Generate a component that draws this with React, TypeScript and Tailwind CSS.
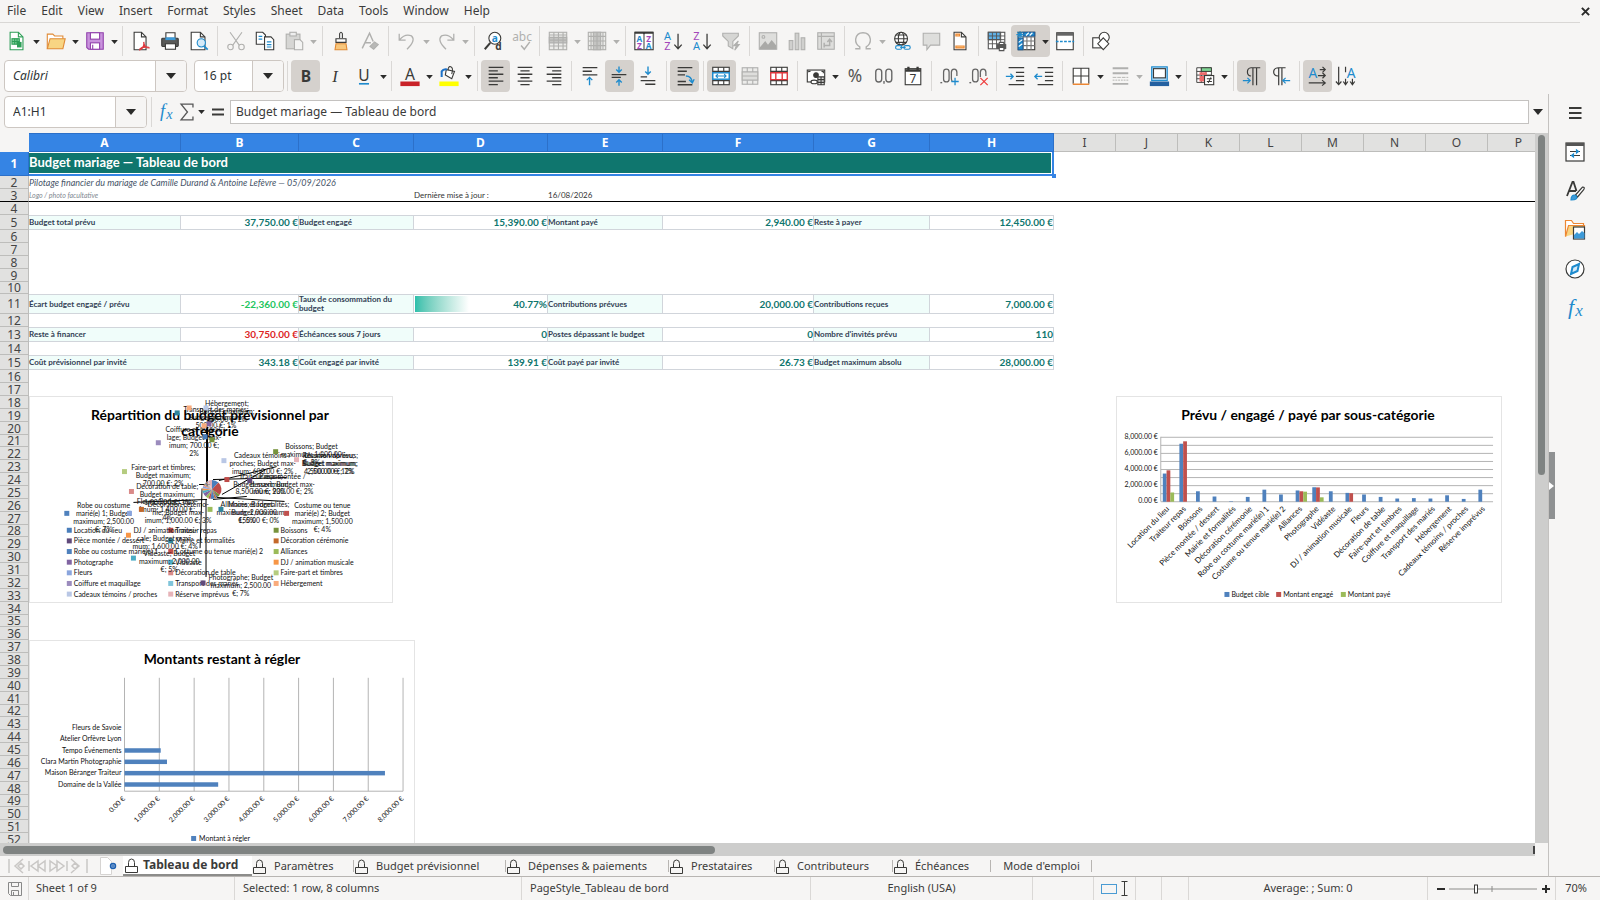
import type { ReactNode } from "react";
import { clsx } from "clsx";

// ─── Icons ────────────────────────────────────────────────
// 24px grid, thin strokes. Greyed commands use the same shapes in light grey.

const DARK = "#3a3a38";
const BLUE = "#1e8bcd";
const GREY = "#b0b0ae";

function Icon({ children, color = DARK, width = 1.2 }: { children: ReactNode; color?: string; width?: number }) {
  return (
    <svg viewBox="0 0 24 24" className="size-6 shrink-0 overflow-visible" fill="none" stroke={color} strokeWidth={width} aria-hidden="true">
      {children}
    </svg>
  );
}

function Glyph({ x, y, size, fill, bold, italic, serif, children }: {
  x: number; y: number; size: number; fill: string; bold?: boolean; italic?: boolean; serif?: boolean; children: ReactNode;
}) {
  return (
    <text x={x} y={y} fontSize={size} fill={fill} stroke="none" textAnchor="middle" fontWeight={bold ? 700 : 400}
      fontStyle={italic ? "italic" : "normal"} fontFamily={serif ? "'Liberation Serif', serif" : "'Noto Sans', sans-serif"}>
      {children}
    </text>
  );
}

const icons: Record<string, ReactNode> = {
  new: (
    <Icon color="#2e9e57">
      <path d="M4.500 2.500h9l5 5v14h-14z" fill="#fff" /><path d="M13.500 2.500v5h5" />
      <rect x="6.500" y="9.500" width="8" height="6" fill="#7fcf9a" /><path d="M6.500 12.500h8M9.500 9.500v6M12 9.500v6" />
      <rect x="12" y="13" width="5" height="6" fill="#2e9e57" stroke="none" />
    </Icon>
  ),
  open: (
    <Icon color="#e08a35">
      <path d="M2.500 20.500v-16h6l2 2h9v3" fill="#fff" /><path d="M2.500 20.500l3-11h16.500l-2.500 11z" fill="#f8d583" />
    </Icon>
  ),
  save: (
    <Icon color="#9141ac">
      <path d="M3 3h18v18h-16l-2-2z" fill="#c993dd" /><rect x="7" y="3" width="10" height="7" fill="#fff" />
      <rect x="7" y="14" width="10" height="7" fill="#fff" /><path d="M9.500 16v5" />
    </Icon>
  ),
  pdf: (
    <Icon>
      <path d="M4.500 2.500h8l5 5v14h-13z" fill="#fff" /><path d="M12.500 2.500v5h5" />
      <path d="M10 22c5-2 6-5 5-9c0 5 3 6.500 6.500 6.500M10.500 21c2-2 6-3 10-2" stroke="#e0393e" strokeWidth="1.500" />
    </Icon>
  ),
  print: (
    <Icon>
      <path d="M7.500 9v-6h10v6" fill="#fff" /><rect x="3" y="9" width="18" height="9" rx="1" fill="#5a5a58" />
      <rect x="7" y="8" width="11" height="3" fill="#3d9ad8" stroke="none" /><rect x="7" y="15" width="11" height="6" fill="#fff" />
    </Icon>
  ),
  preview: (
    <Icon>
      <path d="M3.500 2.500h10l5 5v14h-15z" fill="#fff" /><path d="M13.500 2.500v5h5" />
      <circle cx="14.500" cy="14" r="4.500" fill="#d5eaf8" stroke={BLUE} /><path d="M17.500 17.500l4 4" stroke={BLUE} strokeWidth="2" />
    </Icon>
  ),
  cut: (
    <Icon color={GREY}>
      <path d="M5.500 2.500l10 14M18.500 2.500l-10 14" /><circle cx="6" cy="18.500" r="3" /><circle cx="18" cy="18.500" r="3" />
    </Icon>
  ),
  copy: (
    <Icon>
      <path d="M2.500 2.500h7l3 3v10h-10z" fill="#fff" /><path d="M11.500 7.500h7l3 3v11h-10z" fill="#fff" />
      <path d="M5 7h4M5 10h4M14 13h5M14 16h5M14 18.500h5" stroke={BLUE} />
    </Icon>
  ),
  paste: (
    <Icon color={GREY}>
      <rect x="3.500" y="4.500" width="15" height="16" fill="#d6d6d4" /><rect x="7.500" y="2.500" width="7" height="4" fill="#eee" />
      <path d="M12.500 10.500h6l3 3v8h-9z" fill="#f4f4f3" />
    </Icon>
  ),
  brush: (
    <Icon>
      <path d="M10.500 9v-5q1.500-3 3 0v5" fill="#fff" /><path d="M6.500 9.500h11v4h-11z" fill="#fff" />
      <path d="M6.500 15h11l1 6.500h-13z" fill="#f8c77d" stroke="#e08a35" />
    </Icon>
  ),
  clear: (
    <Icon color={GREY}>
      <path d="M3.500 20l8-16.500l4 9M7 14h6" strokeWidth="1.600" /><path d="M12 18l5-5l4 3l-5 5z" fill="#b8b8b6" />
    </Icon>
  ),
  undo: <Icon color={GREY} width={1.4}><path d="M3.500 4v7h7M4 10.500q6-7 13-4q5 5-5 14.500" /></Icon>,
  redo: <Icon color={GREY} width={1.4}><path d="M20.500 4v7h-7M20 10.500q-6-7-13-4q-5 5 5 14.500" /></Icon>,
  find: (
    <Icon>
      <circle cx="14" cy="9" r="6.500" fill="#fff" /><path d="M9 14l-6 7" strokeWidth="2.200" />
      <Glyph x={14} y={13} size={11} fill={BLUE} bold>a</Glyph><Glyph x={18} y={22} size={11} fill={DARK} bold>d</Glyph>
    </Icon>
  ),
  spell: <Icon color={GREY} width={1.6}><Glyph x={12} y={12} size={13} fill={GREY}>abc</Glyph><path d="M11 17l3.500 4l6-8" /></Icon>,
  row: (
    <Icon color={GREY}>
      <rect x="2.500" y="2.500" width="19" height="19" fill="#ececea" /><path d="M2.500 8h19v6h-19z" fill="#c4c4c2" />
      <path d="M2.500 5.500h19M2.500 11h19M2.500 17.500h19M7.500 2.500v19M12.500 2.500v19M17.500 2.500v19" />
    </Icon>
  ),
  column: (
    <Icon color={GREY}>
      <rect x="2.500" y="2.500" width="19" height="19" fill="#ececea" /><path d="M8 2.500h8v19h-8z" fill="#c4c4c2" />
      <path d="M2.500 7h19M2.500 12h19M2.500 17h19M5.500 2.500v19M12 2.500v19M18.500 2.500v19" />
    </Icon>
  ),
  sort: (
    <Icon>
      <rect x="2" y="2.500" width="20" height="19" fill="#fff" /><path d="M2 3h20M12 3v18" strokeWidth="2" />
      <path d="M12 4.500v16.500" stroke="#fff" strokeWidth="1" />
      <Glyph x={7} y={13} size={9} fill={BLUE} bold>A</Glyph><Glyph x={7} y={21} size={9} fill="#a347ba" bold>Z</Glyph>
      <Glyph x={17} y={13} size={9} fill="#a347ba" bold>Z</Glyph><Glyph x={17} y={21} size={9} fill={BLUE} bold>A</Glyph>
    </Icon>
  ),
  asc: (
    <Icon width={1.4}>
      <Glyph x={6} y={10.5} size={12} fill={BLUE}>A</Glyph><Glyph x={6} y={22} size={12} fill="#a347ba">Z</Glyph>
      <path d="M17.500 4v16M13.500 16l4 4.500l4-4.500" />
    </Icon>
  ),
  desc: (
    <Icon width={1.4}>
      <Glyph x={6} y={10.5} size={12} fill="#a347ba">Z</Glyph><Glyph x={6} y={22} size={12} fill={BLUE}>A</Glyph>
      <path d="M17.500 4v16M13.500 16l4 4.500l4-4.500" />
    </Icon>
  ),
  filter: (
    <Icon color={GREY}>
      <path d="M3 3.500h17v3l-6 6v8l-5-3v-5l-6-6z" fill="#d6d6d4" /><path d="M20 12l-5 5h3l-2 5l5-6h-3z" fill="#b0b0ae" />
    </Icon>
  ),
  image: (
    <Icon color={GREY}>
      <rect x="2.500" y="3" width="19" height="18" fill="#dededc" /><path d="M3 19l6-7l3 4l4-5l5 6v4h-18z" fill="#a9a9a7" stroke="none" />
      <circle cx="7" cy="7.500" r="1.500" />
    </Icon>
  ),
  chart: (
    <Icon color={GREY}>
      <rect x="3.500" y="11.500" width="4" height="10" fill="#d0d0ce" /><rect x="10" y="3.500" width="4" height="18" fill="#d0d0ce" />
      <rect x="16.500" y="8.500" width="4" height="13" fill="#d0d0ce" />
    </Icon>
  ),
  pivot: (
    <Icon color={GREY}>
      <rect x="3" y="3" width="18" height="18" fill="#dededc" /><path d="M7 3v18M3 7h18" />
      <path d="M10 17h6v-6M10 14v5M13.500 13l2.500-3l2.500 3" strokeWidth="1.600" />
    </Icon>
  ),
  omega: <Icon color={GREY} width={1.5}><path d="M3.500 20.500h5v-2q-5-3-4.500-8.500q1-7 8-7t8 7q.5 5.500-4.500 8.500v2h5" /></Icon>,
  link: (
    <Icon>
      <circle cx="11" cy="9.500" r="7" fill="#fff" /><ellipse cx="11" cy="9.500" rx="3" ry="7" /><path d="M4 9.500h14M5 5.500h12M5 13.500h12" />
      <rect x="5" y="17" width="7" height="4" rx="2" stroke={BLUE} fill="#f6f5f4" /><rect x="14" y="17" width="7" height="4" rx="2" stroke={BLUE} fill="#f6f5f4" />
      <path d="M10 19h6" stroke={BLUE} />
    </Icon>
  ),
  comment: <Icon color={GREY}><path d="M3.500 3.500h18v13h-10l-4 5v-5h-4z" fill="#dededc" /></Icon>,
  header: (
    <Icon>
      <path d="M5.500 2.500h8l5 5v14h-13z" fill="#fff" /><path d="M13.500 2.500v5h5" />
      <path d="M7.500 4.500h4v2h-4zM7.500 17.500h9v2h-9z" stroke="#ed8733" fill="#f8d08f" />
    </Icon>
  ),
  area: (
    <Icon color="#555">
      <rect x="2.500" y="2.500" width="18" height="18" fill="#fff" /><path d="M2.500 2.500h13v8h-13z" fill="#5fb0e6" />
      <path d="M2.500 6.500h18M2.500 10.500h18M2.500 15h18M7 2.500v18M11.500 2.500v18M16 2.500v18" strokeWidth="1" />
      <rect x="12.500" y="16" width="9" height="4" fill="#5a5a58" /><path d="M14.500 13.500h5v2.500h-5zM14.500 19h5v3.500h-5z" fill="#fff" />
    </Icon>
  ),
  freeze: (
    <Icon>
      <rect x="3.500" y="2.500" width="18" height="19" fill="#fff" /><path d="M3.500 7.500h18M3.500 12h18M3.500 17h18M9 2.500v19M13 2.500v19M17.500 2.500v19" stroke="#777" />
      <path d="M9.500 2.500h12v4h-12zM3.500 9h5v12.500h-5z" fill={BLUE} stroke="#1c5fa0" /><path d="M4 13.500l4-3M4 18l4-3M12 6l3-3M16 6l3-3" stroke="#fff" />
      <path d="M5.500 1v8M1.500 5h8M2.500 2l6 6M8.500 2l-6 6" stroke={BLUE} />
    </Icon>
  ),
  split: (
    <Icon>
      <rect x="3" y="3" width="18" height="18.500" fill="#fff" /><path d="M3 4.500h18" strokeWidth="3.500" stroke="#666" /><path d="M2 12.500h20" stroke={BLUE} strokeDasharray="3 1.500" strokeWidth="1.500" />
    </Icon>
  ),
  shapes: (
    <Icon>
      <rect x="3" y="8.500" width="11" height="11" fill="#fff" /><circle cx="15.500" cy="8" r="5.500" fill="#fff" />
      <path d="M14.500 8.500l6 6.500l-6 6.500l-6-6.500z" fill="#fff" />
    </Icon>
  ),
  bold: <Icon><Glyph x={12} y={18} size={17} fill={DARK} bold>B</Glyph></Icon>,
  italic: <Icon><Glyph x={12} y={18} size={18} fill={DARK} italic serif>I</Glyph></Icon>,
  underline: <Icon><Glyph x={12} y={17} size={17} fill={DARK}>U</Glyph><path d="M6.500 20.500h11" stroke={BLUE} strokeWidth="1.800" /></Icon>,
  color: <Icon><Glyph x={12} y={16} size={17} fill={DARK}>A</Glyph><path d="M1.500 20.500h21" stroke="#c92228" strokeWidth="5" /></Icon>,
  fill: (
    <Icon>
      <path d="M9 5l9 2l-3 8l-7-4z" fill="#fff" /><path d="M11 6q0-5 3-4t1 8" /><path d="M4 13v-6q2-3 6-2" stroke="#1c71c8" strokeWidth="2.200" />
      <path d="M1.500 20.500h21" stroke="#ffff00" strokeWidth="5" />
    </Icon>
  ),
  left: <Icon width={1.4}><path d="M4 2.500h16M4 6.300h10M4 10.100h16M4 13.900h10M4 17.700h16M4 21.500h10" /></Icon>,
  center: <Icon width={1.4}><path d="M4 2.500h16M7 6.300h10M4 10.100h16M7 13.900h10M4 17.700h16M7 21.500h10" /></Icon>,
  right: <Icon width={1.4}><path d="M4 2.500h16M10 6.300h10M4 10.100h16M10 13.900h10M4 17.700h16M10 21.500h10" /></Icon>,
  top: <Icon width={1.5}><path d="M4 2.800h16M4 6.800h10M4 10.800h16" /><path d="M11.500 22v-8.500M8.500 16.500l3-3l3 3" stroke={BLUE} /></Icon>,
  middle: <Icon width={1.5}><path d="M4 10.500h16M4 13.500h10" /><path d="M12 1.500v6.500M9 5l3 3l3-3M12 22.500v-6.500M9 19l3-3l3 3" stroke={BLUE} /></Icon>,
  bottom: <Icon width={1.5}><path d="M4 13h7M4 17h16M9 21h11" /><path d="M12 1.500v8.500M9 7l3 3l3-3" stroke={BLUE} /></Icon>,
  wrap: <Icon width={1.5}><path d="M4 2.800h16M4 6.800h10M4 10.800h8M4 18h9M4 21.500h16" /><path d="M13 12q6 0 7 7M16.500 16l3.500 3.500l2-4" stroke={BLUE} /></Icon>,
  merge: (
    <Icon>
      <rect x="3" y="2.500" width="18" height="19" fill="#fff" /><path d="M3 7h18M3 17h18M9 2.500v4M15 2.500v4M9 17v4.500M15 17v4.500" />
      <rect x="3" y="8.500" width="18" height="7" fill="#fff" stroke={BLUE} strokeWidth="1.600" /><path d="M6 12h12M8.500 10l-2 2l2 2M15.500 10l2 2l-2 2" stroke={BLUE} />
    </Icon>
  ),
  cells: <Icon color={GREY}><rect x="3.500" y="3" width="17" height="18" fill="#ececea" /><path d="M3.500 7.500h17v9h-17z" fill="#dededc" /><path d="M3.500 12h17M9 3v4.500M15 3v4.500M9 16.500v4.500M15 16.500v4.500" /></Icon>,
  unmerge: (
    <Icon>
      <rect x="3" y="2.500" width="18" height="19" fill="#fff" /><path d="M3 7h18M3 17h18M9 2.500v4M15 2.500v4M9 17v4.500M15 17v4.500" />
      <path d="M3 8.500h18v7.500h-18zM8.500 8.500v7.500M15.500 8.500v7.500" fill="#fff" stroke="#e0393e" strokeWidth="1.500" />
    </Icon>
  ),
  currency: (
    <Icon>
      <rect x="2.500" y="5.500" width="19" height="13" fill="#fff" /><circle cx="12" cy="11" r="2.500" fill={DARK} /><path d="M4 8v-1h2M18 7h2v2" />
      <ellipse cx="10" cy="18.500" rx="3.500" ry="2" fill="#fff" /><path d="M14 13h7v8.500h-7zM14 16h7M14 19h7M17.500 13v8.500" fill="#ddd" />
    </Icon>
  ),
  percent: <Icon><Glyph x={12} y={19} size={19} fill="#555">%</Glyph></Icon>,
  number: <Icon width={1.5} color="#666"><rect x="3" y="4.500" width="6.500" height="14" rx="3.200" /><rect x="14" y="4.500" width="6.500" height="14" rx="3.200" /><path d="M12 17.500v3" /></Icon>,
  date: <Icon><rect x="3.500" y="4" width="17" height="17.500" fill="#fff" /><path d="M3.500 6h17M7 2v4M17 2v4" strokeWidth="2.500" /><Glyph x={12} y={19.5} size={13} fill={DARK}>7</Glyph></Icon>,
  addDec: <Icon width={1.4} color="#666"><path d="M2.500 18.500v1.500" strokeWidth="2" /><rect x="5" y="4.500" width="6" height="14" rx="3" /><path d="M14.500 18q-1-1-1-3.500v-6.500q0-3.500 3-3.500t3 3.500v4" /><path d="M17.500 14v8M13.500 18h8" stroke={BLUE} /></Icon>,
  delDec: <Icon width={1.4} color="#666"><path d="M2.500 18.500v1.500" strokeWidth="2" /><rect x="5" y="4.500" width="6" height="14" rx="3" /><path d="M13.500 13v-5q0-3.500 3-3.500t3 3.500v4" /><path d="M13.500 14l8 8M21.500 14l-8 8" stroke="#ee3e3e" /></Icon>,
  indent: <Icon width={1.4}><path d="M5 2.800h17M13 8h9M13 12.500h9M13 17h9M5 21.500h17" /><path d="M2 12.500h8M7 9.500l3 3l-3 3" stroke={BLUE} /></Icon>,
  outdent: <Icon width={1.4}><path d="M5 2.800h17M13 8h9M13 12.500h9M13 17h9M5 21.500h17" /><path d="M2 12.500h8M5 9.500l-3 3l3 3" stroke={BLUE} /></Icon>,
  borders: <Icon><path d="M3.500 20.500v-17h17v17M12 3.500v17M3.500 12h17" fill="#fff" /><path d="M3 21h18" stroke="#ed8733" strokeWidth="1.600" /></Icon>,
  style: <Icon color={GREY} width={2}><path d="M4 3.500h17M4 9h17M4 20.500h17" /><path d="M4 13.500h17" strokeDasharray="4 1" strokeWidth="1" /><path d="M4 16.500h17" strokeDasharray="2 1" strokeWidth="1" /></Icon>,
  line: <Icon><rect x="4" y="2" width="17" height="15" fill="#a5d3f2" stroke={BLUE} /><rect x="6" y="4" width="13" height="10" fill="#fff" /><path d="M2 20.500h21" stroke="#2460a0" strokeWidth="5" /></Icon>,
  cond: (
    <Icon>
      <path d="M3 3h16v16h-16zM8 3v16M13 3v16M3 7h16M3 11h16M3 15h16" fill="#fff" strokeWidth="1" /><path d="M8 3h11v4h-11z" fill="#7fd694" strokeWidth="1" /><path d="M6 8h8v3h-8zM6 12h5v6h-5z" fill="#ed6b6b" stroke="none" />
      <rect x="11.500" y="11.500" width="10" height="10" fill="#fff" /><path d="M14 15h5.500M14 18h5.500M18.500 13.500l-3 6" />
    </Icon>
  ),
  ltr: <Icon width={1.3}><path d="M11 12q-4-.5-4-4.500t4-4.500h10M13 3v19M17 3v19" /><path d="M2 17h8M7 14l3 3l-3 3" stroke={BLUE} /></Icon>,
  rtl: <Icon width={1.3}><path d="M9 12q-5-.5-5-4.500t5-4.500h8M9.500 3v19M13 3v19" /><path d="M14 17h8M17 14l-3 3l3 3" stroke={BLUE} /></Icon>,
  hText: <Icon width={1.3}><Glyph x={7.5} y={14.5} size={15} fill={BLUE}>A</Glyph><path d="M15 5h6M18 2l3 3l-3 3M13 11.500h8M18 8.500l3 3l-3 3M3 19.500h18M17.500 16.500l3.500 3l-3.500 3" /></Icon>,
  vText: <Icon width={1.3}><Glyph x={17.5} y={14.5} size={15} fill={BLUE}>A</Glyph><path d="M4 2v19M1 18l3 3.500l3-3.500M11.500 2v6M11.500 15v6M9 18l2.500 3.500l2.500-3.500M19 15v6M16.500 18l2.500 3.500l2.500-3.500" /></Icon>,
  fx: <Icon><Glyph x={8} y={18} size={22} fill={BLUE} italic serif>f</Glyph><Glyph x={16} y={20} size={17} fill={BLUE} italic serif>x</Glyph></Icon>,
  sigma: <Icon width={1.4} color="#555"><path d="M18.500 7v-3.500h-13l7 8.500l-7 8.500h13v-3.500" /></Icon>,
  equal: <Icon width={2.2}><path d="M6 9.500h12M6 14.500h12" /></Icon>,
  menu: <Icon width={1.8}><path d="M6 7h12.500M6 12h12.500M6 17h12.500" /></Icon>,
  properties: <Icon><rect x="3" y="3" width="18" height="18" fill="#fff" /><path d="M3 4.500h18" strokeWidth="3" stroke="#555" /><path d="M7 11.500h10M7 15.500h10" /><path d="M13.500 10v3l2-1.500zM10.500 14v3l-2-1.500z" fill={BLUE} stroke={BLUE} /></Icon>,
  styles: <Icon><path d="M4 17l5.500-14h1l3 9M6 12h7" strokeWidth="1.800" /><path d="M12.500 16l7-8q3 0 1 3l-6 7z" fill="#fff" /><path d="M8 21q0-6 5-4.500q3 4.500-5 4.500z" fill="#3d9ad8" stroke={BLUE} /></Icon>,
  gallery: (
    <Icon color="#ed8733">
      <path d="M2.500 18.500v-16h6l2 3h10v3" fill="#fff" /><path d="M2.500 18.500l3-11h16l-1 6" fill="#f8d583" />
      <rect x="10.500" y="9" width="11" height="12" fill="#fff" stroke={DARK} /><path d="M11 17l3-3l2 2l3-3l2.500 2v5.500h-10.500z" fill="#3d9ad8" stroke="none" />
    </Icon>
  ),
  navigator: <Icon><circle cx="12" cy="12" r="9" fill="#fff" /><path d="M16 7l-1.500 7l-6.500 3l1.500-7z" fill="#d5eaf8" stroke={BLUE} strokeWidth="2" /></Icon>,
};

// ─── Toolbars ─────────────────────────────────────────────

type Item = { id: string; label: string; split?: boolean; active?: boolean; off?: boolean } | "|";

const standard: Item[] = [
  { id: "new", label: "New", split: true }, { id: "open", label: "Open", split: true }, { id: "save", label: "Save", split: true }, "|",
  { id: "pdf", label: "Export as PDF" }, { id: "print", label: "Print" }, { id: "preview", label: "Print Preview" }, "|",
  { id: "cut", label: "Cut", off: true }, { id: "copy", label: "Copy" }, { id: "paste", label: "Paste", split: true, off: true }, "|",
  { id: "brush", label: "Clone Formatting" }, { id: "clear", label: "Clear Formatting", off: true }, "|",
  { id: "undo", label: "Undo", split: true, off: true }, { id: "redo", label: "Redo", split: true, off: true }, "|",
  { id: "find", label: "Find and Replace" }, { id: "spell", label: "Spelling", off: true }, "|",
  { id: "row", label: "Row", split: true, off: true }, { id: "column", label: "Column", split: true, off: true }, "|",
  { id: "sort", label: "Sort" }, { id: "asc", label: "Sort Ascending" }, { id: "desc", label: "Sort Descending" }, { id: "filter", label: "AutoFilter", off: true }, "|",
  { id: "image", label: "Insert Image", off: true }, { id: "chart", label: "Insert Chart", off: true }, { id: "pivot", label: "Pivot Table", off: true }, "|",
  { id: "omega", label: "Special Character", split: true, off: true }, { id: "link", label: "Hyperlink" }, { id: "comment", label: "Comment", off: true }, { id: "header", label: "Headers and Footers" }, "|",
  { id: "area", label: "Print Area" }, { id: "freeze", label: "Freeze Rows and Columns", split: true, active: true }, { id: "split", label: "Split Window" }, "|",
  { id: "shapes", label: "Draw Functions" },
];

const formatting: Item[] = [
  { id: "bold", label: "Bold", active: true }, { id: "italic", label: "Italic" }, { id: "underline", label: "Underline", split: true }, "|",
  { id: "color", label: "Font Color", split: true }, { id: "fill", label: "Background Color", split: true }, "|",
  { id: "left", label: "Align Left", active: true }, { id: "center", label: "Center Horizontally" }, { id: "right", label: "Align Right" }, "|",
  { id: "top", label: "Align Top" }, { id: "middle", label: "Center Vertically", active: true }, { id: "bottom", label: "Align Bottom" }, "|",
  { id: "wrap", label: "Wrap Text", active: true }, "|",
  { id: "merge", label: "Merge and Center", active: true }, { id: "cells", label: "Merge Cells", off: true }, { id: "unmerge", label: "Unmerge Cells" }, "|",
  { id: "currency", label: "Format as Currency", split: true }, { id: "percent", label: "Format as Percent" }, { id: "number", label: "Format as Number" }, { id: "date", label: "Format as Date" }, "|",
  { id: "addDec", label: "Add Decimal Place" }, { id: "delDec", label: "Delete Decimal Place" }, "|",
  { id: "indent", label: "Increase Indent" }, { id: "outdent", label: "Decrease Indent" }, "|",
  { id: "borders", label: "Borders", split: true }, { id: "style", label: "Border Style", split: true, off: true }, { id: "line", label: "Border Color", split: true }, "|",
  { id: "cond", label: "Conditional", split: true }, "|",
  { id: "ltr", label: "Left-To-Right", active: true }, { id: "rtl", label: "Right-To-Left" }, "|",
  { id: "hText", label: "Text left to right", active: true }, { id: "vText", label: "Text top to bottom" },
];

function Caret({ off, big }: { off?: boolean; big?: boolean }) {
  return (
    <svg viewBox="0 0 10 6" className={big ? "w-[10px] h-[6px]" : "w-[7px] h-[4px]"} aria-hidden="true">
      <path d="M0 0h10l-5 6z" fill={off ? GREY : "#2b2b2a"} />
    </svg>
  );
}

function Divider() {
  return <span className="h-[30px] w-px shrink-0 bg-[#dad8d6]" />;
}

// The dividers share whatever width is left between the button groups.
function Tools({ items, className }: { items: Item[]; className: string }) {
  return (
    <div className={clsx("flex items-center", className)}>
      {items.map((item, i) =>
        item === "|" ? <span key={i} className="flex flex-1 justify-center"><Divider /></span> : (
          <div key={item.id} className={clsx("flex h-8 shrink-0 items-center rounded", item.active && "bg-[#d5d1cd]")}>
            <button aria-label={item.label} disabled={item.off} className="flex h-8 w-[29px] items-center justify-center [&>svg]:size-[22px]">
              {icons[item.id]}
            </button>
            {item.split && (
              <button aria-label={`${item.label} options`} disabled={item.off} className="flex h-8 w-[10px] items-center justify-center pt-0.5">
                <Caret off={item.off} />
              </button>
            )}
          </div>
        )
      )}
    </div>
  );
}

function Combo({ label, value, className, italic }: { label: string; value: string; className: string; italic?: boolean }) {
  return (
    <div className={clsx("flex h-8 shrink-0 overflow-hidden rounded border border-[#cdc7c2] bg-white", className)}>
      <input aria-label={label} defaultValue={value} className={clsx("min-w-0 flex-1 pl-2 text-[12px] text-[#2e3436] outline-none", italic && "italic")} />
      <button aria-label={`${label} list`} className="flex w-[31px] items-center justify-center border-l border-[#cdc7c2] bg-[#f6f5f4]">
        <Caret big />
      </button>
    </div>
  );
}

// ─── Sheet ────────────────────────────────────────────────

const columns = [
  ["A", 152], ["B", 118], ["C", 115], ["D", 134], ["E", 115], ["F", 151], ["G", 116], ["H", 124],
  ["I", 62], ["J", 62], ["K", 62], ["L", 62], ["M", 62], ["N", 62], ["O", 62], ["P", 62],
] as const;

const topHeights = [24, 13, 13, 13, 15, 13, 13, 13, 13, 12, 20, 13, 15, 13, 15, 13, 13];
const rows = Array.from({ length: 52 }, (_, i) => ({ n: i + 1, height: topHeights[i] ?? ((i + 1) % 7 === 0 ? 12 : 13) }));

const kpis: Record<number, string[]> = {
  5: ["Budget total prévu", "37,750.00 €", "Budget engagé", "15,390.00 €", "Montant payé", "2,940.00 €", "Reste à payer", "12,450.00 €"],
  11: ["Écart budget engagé / prévu", "-22,360.00 €", "Taux de consommation du budget", "40.77%", "Contributions prévues", "20,000.00 €", "Contributions reçues", "7,000.00 €"],
  13: ["Reste à financer", "30,750.00 €", "Échéances sous 7 jours", "0", "Postes dépassant le budget", "0", "Nombre d'invités prévu", "110"],
  15: ["Coût prévisionnel par invité", "343.18 €", "Coût engagé par invité", "139.91 €", "Coût payé par invité", "26.73 €", "Budget maximum absolu", "28,000.00 €"],
};

function valueTone(v: string) {
  if (v.startsWith("-")) return "text-[#22c55e]";
  return v === "30,750.00 €" ? "text-[#dc2626]" : "text-[#0f766e]";
}

function RowCells({ n }: { n: number }) {
  if (n === 1) {
    return (
      <td colSpan={8} className="relative h-6 p-0">
        <div className="h-6 border-r-2 border-b-2 border-[#3584e4] bg-white py-px pr-px">
          <div className="h-5 bg-[#0f766e] text-[13px] leading-[18px] font-bold text-white">Budget mariage — Tableau de bord</div>
        </div>
        <span className="absolute -right-0.5 -bottom-0.5 size-1 bg-[#3584e4]" />
      </td>
    );
  }
  if (n === 2) return <td colSpan={8} className="p-0 text-[9px] leading-[10px] text-[#475569] italic">Pilotage financier du mariage de Camille Durand &amp; Antoine Lefèvre — 05/09/2026</td>;
  if (n === 3) {
    return (
      <>
        <td colSpan={3} className="border-b border-black p-0 text-[7px] text-[#808890] italic">Logo / photo facultative</td>
        <td className="border-b border-black p-0 text-[8px]">Dernière mise à jour :</td>
        <td className="border-b border-black p-0 text-[8px]">16/08/2026</td>
        <td colSpan={11} className="border-b border-black p-0" />
      </>
    );
  }
  const cells = kpis[n];
  if (!cells) return <td colSpan={16} className="p-0" />;
  return cells.map((text, i) =>
    i % 2 === 0 ? (
      <td key={i} className="border-y border-r border-[#d1d5db] bg-[#f0fdfa] p-0 text-[8px] leading-[9px] font-bold text-[#334155]">{text}</td>
    ) : (
      <td key={i} className={clsx("border-y border-r border-[#d1d5db] p-0 text-right text-[10px] font-bold", valueTone(text))}>
        {text === "40.77%" ? (
          <div className="flex h-[18px] items-center justify-between pl-px">
            <span className="h-4 w-[41%] bg-gradient-to-r from-[#2abfab] to-white" />
            {text}
          </div>
        ) : text}
      </td>
    )
  );
}

function Sheet() {
  return (
    <table className="w-[1550px] table-fixed border-separate border-spacing-0 font-[Lato,sans-serif] text-[#333]">
      <colgroup>
        <col className="w-[29px]" />
        {columns.map(([name, width]) => <col key={name} style={{ width }} />)}
      </colgroup>
      <thead className="font-['Noto_Sans',sans-serif] text-[12px] leading-4">
        <tr className="h-[19px]">
          <td className="bg-[#f6f5f4] p-0" />
          {columns.map(([name], i) => (
            <th key={name} scope="col" className={clsx("border-t border-r border-b p-0", i < 8 ? "border-[#2c70c9] bg-[#3584e4] font-bold text-white" : "border-[#bdbdbb] bg-[#e1e1e0] font-normal text-[#444]")}>{name}</th>
          ))}
        </tr>
      </thead>
      <tbody className="leading-[11px]">
        {rows.map(({ n, height }) => (
          <tr key={n} style={{ height }}>
            <th scope="row" className={clsx("border-r border-b p-0 font-['Noto_Sans',sans-serif] text-[12px]", n === 1 ? "border-[#2c70c9] bg-[#3584e4] font-bold text-white" : "bg-[#e1e1e0] font-normal text-[#444]", n === 3 ? "border-b-black border-r-[#bdbdbb]" : n > 1 && "border-[#bdbdbb]")}>{n}</th>
            <RowCells n={n} />
          </tr>
        ))}
      </tbody>
    </table>
  );
}

// ─── Charts ───────────────────────────────────────────────

const categories = [
  "Location du lieu", "Traiteur repas", "Boissons", "Pièce montée / dessert", "Mairie et formalités", "Décoration cérémonie",
  "Robe ou costume marié(e) 1", "Costume ou tenue marié(e) 2", "Alliances", "Photographe", "Vidéaste", "DJ / animation musicale",
  "Fleurs", "Décoration de table", "Faire-part et timbres", "Coiffure et maquillage", "Transport des mariés", "Hébergement",
  "Cadeaux témoins / proches", "Réserve imprévus",
];

const palette = [
  "#4a7ebb", "#be4b48", "#77933c", "#604a7b", "#31859c", "#c4682a", "#4f81bd", "#c0504d", "#9bbb59", "#8064a2",
  "#4bacc6", "#f79646", "#8aa5dd", "#d98a88", "#b5cc7f", "#9b8bbd", "#7fc4da", "#f9ab7c", "#b9c7e5", "#e6b3b8",
];

const shares = [12, 23, 5, 2, 1, 3, 7, 4, 5, 7, 5, 4, 4, 3, 2, 2, 1, 2, 2, 7];

// x, first baseline, lines
const callouts: [number, number, string[]][] = [
  [198, 9, ["Hébergement;", "Budget maximum;", "800.00 €; 2%"]],
  [187, 15, ["Transport des mariés;", "Budget maximum;", "500.00 €; 1%"]],
  [165, 35, ["Coiffure et maquil-", "lage; Budget max-", "imum; 700.00 €;", "2%"]],
  [134, 73, ["Faire-part et timbres;", "Budget maximum;", "700.00 €; 2%"]],
  [138, 93, ["Décoration de table;", "Budget maximum;", "1,000.00 €; 3%"]],
  [138, 108, ["Fleurs; Budget max-", "imum; 1,400.00 €;", "4%"]],
  [149, 111, ["Décoration cérémo-", "nie; Budget max-", "imum; 1,000.00 €; 3%"]],
  [74, 112, ["Robe ou costume", "marié(e) 1; Budget", "maximum; 2,500.00", "€; 7%"]],
  [136, 137, ["DJ / animation musi-", "cale; Budget maxi-", "mum; 1,600.00 €; 4%"]],
  [140, 160, ["Vidéaste; Budget", "maximum; 2,000.00", "€; 5%"]],
  [212, 184, ["Photographe; Budget", "maximum; 2,500.00", "€; 7%"]],
  [218, 111, ["Alliances; Budget", "maximum; 2,000.00", "€; 5%"]],
  [230, 111, ["Mairie et formalités;", "Budget maximum;", "150.00 €; 0%"]],
  [294, 112, ["Costume ou tenue", "marié(e) 2; Budget", "maximum; 1,500.00", "€; 4%"]],
  [234, 61, ["Cadeaux témoins /", "proches; Budget max-", "imum; 600.00 €; 2%"]],
  [283, 52, ["Boissons; Budget", "maximum; 1,800.00", "€; 5%"]],
  [301, 61, ["Location du lieu;", "Budget maximum;", "4,500.00 €; 12%"]],
  [302, 61, ["Réserve imprévus;", "Budget maximum;", "2,500.00 €; 7%"]],
  [232, 82, ["Traiteur repas;", "Budget maximum;", "8,500.00 €; 23%"]],
  [254, 82, ["Pièce montée /", "dessert; Budget max-", "imum; 900.00 €; 2%"]],
];

const markers: [number, number, number][] = [
  [160, 11, 17], [148, 16, 4], [177, 11, 18], [129, 46, 15], [95, 75, 14], [102, 95, 13], [37, 117, 6], [100, 117, 12],
  [112, 113, 5], [181, 113, 8], [192, 113, 4], [258, 117, 7], [99, 139, 11], [104, 162, 10], [174, 187, 3], [195, 64, 18],
  [247, 55, 2], [268, 63, 19], [198, 83, 1], [221, 84, 3], [180, 27, 9], [176, 40, 0], [183, 43, 2], [175, 29, 17],
];

function slicePath(index: number) {
  const total = shares.reduce((a, b) => a + b, 0);
  const from = (shares.slice(0, index).reduce((a, b) => a + b, 0) / total) * Math.PI * 2;
  const to = from + (shares[index] / total) * Math.PI * 2;
  const at = (t: number) => `${183 + 9.5 * Math.sin(t)} ${93 - 9.5 * Math.cos(t)}`;
  return `M183 93L${at(from)}A9.5 9.5 0 0 1 ${at(to)}z`;
}

const chartBox = "absolute border border-[#e4e4e4] bg-white font-[Lato,sans-serif]";

function PieChart() {
  return (
    <svg viewBox="0 0 364 206" className={clsx(chartBox, "top-[263px] left-[29px] w-[364px]")} fontSize="7" fill="#111" role="img" aria-label="Répartition du budget prévisionnel par catégorie">
      <g fontSize="14" fontWeight="700" fill="#000" textAnchor="middle">
        <text x="181" y="23">Répartition du budget prévisionnel par</text>
        <text x="181" y="39">catégorie</text>
      </g>
      {categories.map((name, i) => {
        const x = [38, 140, 246][i % 3];
        const y = 134 + Math.floor(i / 3) * 10.7;
        return (
          <g key={name}>
            <rect x={x - 1} y={y - 2.5} width="5" height="5" fill={palette[i]} />
            <text x={x + 6} y={y + 2.5}>{name}</text>
          </g>
        );
      })}
      <g stroke="#000" strokeWidth="1" fill="none">
        <path d="M178 30v60" strokeWidth="2" />
        <path d="M177 103v78M173 92l-2 60M104 106l74-3M170 88h13M184 83l74-2M190 84l58-14M193 98l44-25M188 101l68 4M184 103l34-3" />
      </g>
      {shares.map((_, i) => <path key={i} d={slicePath(i)} fill={palette[i]} />)}
      <g textAnchor="middle">
        {callouts.map(([x, y, lines]) => lines.map((line, i) => <text key={`${x}-${line}`} x={x} y={y + i * 8}>{line}</text>))}
      </g>
      {markers.map(([x, y, c]) => <rect key={`${x}-${y}`} x={x - 2.5} y={y - 2.5} width="5" height="5" fill={palette[c]} />)}
    </svg>
  );
}

// Budget cible, montant engagé, montant payé
const spend = [
  [3500, 3900, 1150], [7200, 7500, 0], [1300, 0, 0], [650, 0, 0], [60, 0, 0], [600, 0, 0], [1500, 0, 0], [900, 0, 0], [1400, 1300, 1250], [1800, 1780, 550],
  [1300, 0, 0], [1100, 1060, 0], [900, 0, 0], [600, 0, 0], [400, 0, 0], [450, 0, 0], [400, 0, 0], [800, 0, 0], [350, 0, 0], [1500, 0, 0],
];
const series: [string, string, number][] = [["Budget cible", "#4f81bd", 108], ["Montant engagé", "#c0504d", 160], ["Montant payé", "#9bbb59", 225]];

function SpendChart() {
  return (
    <svg viewBox="0 0 386 206" className={clsx(chartBox, "top-[263px] left-[1116px] w-[386px]")} fontSize="7" fill="#111" role="img" aria-label="Prévu / engagé / payé par sous-catégorie">
      <text x="192" y="23" fontSize="14" fontWeight="700" fill="#000" textAnchor="middle">Prévu / engagé / payé par sous-catégorie</text>
      {Array.from({ length: 9 }, (_, i) => <path key={i} d={`M44 ${40.5 + i * 8.1}H378`} stroke="#b3b3b3" />)}
      <path d="M44 40v65" stroke="#b3b3b3" />
      {["8,000.00 €", "6,000.00 €", "4,000.00 €", "2,000.00 €", "0.00 €"].map((t, i) => <text key={t} x="41" y={42 + i * 16.2} textAnchor="end">{t}</text>)}
      {spend.map((group, i) => group.map((v, s) => (
        <rect key={`${i}-${s}`} x={46 + i * 16.7 + s * 3.8} y={105.3 - v * 0.0081} width="3.8" height={v * 0.0081} fill={series[s][1]} />
      )))}
      {categories.map((name, i) => {
        const x = 53 + i * 16.7;
        return <text key={name} x={x} y="113" textAnchor="end" fontSize="8" transform={`rotate(-45 ${x} 113)`}>{name}</text>;
      })}
      {series.map(([name, color, x]) => (
        <g key={name}>
          <rect x={x} y="196" width="5" height="5" fill={color} />
          <text x={x + 7} y="201">{name}</text>
        </g>
      ))}
    </svg>
  );
}

const suppliers: [string, number][] = [
  ["Fleurs de Savoie", 0], ["Atelier Orfèvre Lyon", 0], ["Tempo Événements", 1040], ["Clara Martin Photographie", 1220], ["Maison Béranger Traiteur", 7480], ["Domaine de la Vallée", 2690],
];

function DueChart() {
  return (
    <svg viewBox="0 0 386 220" className={clsx(chartBox, "top-[507px] left-[29px] w-[386px]")} fontSize="7" fill="#111" role="img" aria-label="Montants restant à régler">
      <text x="193" y="23" fontSize="14" fontWeight="700" fill="#000" textAnchor="middle">Montants restant à régler</text>
      {Array.from({ length: 9 }, (_, i) => {
        const x = 95 + i * 35;
        return (
          <g key={i}>
            <path d={`M${x} 37v114`} stroke="#b3b3b3" />
            <text x={x + 1} y="159" textAnchor="end" transform={`rotate(-45 ${x + 1} 159)`}>{i === 0 ? "0.00 €" : `${i},000.00 €`}</text>
          </g>
        );
      })}
      <path d="M95 151h280" stroke="#b3b3b3" />
      {suppliers.map(([name, due], i) => (
        <g key={name}>
          <text x="92" y={89.5 + i * 11.4} textAnchor="end">{name}</text>
          <rect x="95" y={85 + i * 11.4} width={due * 0.035} height="4.5" fill="#4f81bd" />
        </g>
      ))}
      <rect x="162" y="196" width="5" height="5" fill="#4f81bd" />
      <text x="170" y="201">Montant à régler</text>
    </svg>
  );
}

// ─── Tabs and status bar ──────────────────────────────────

function Lock() {
  return (
    <svg viewBox="0 0 13 15" className="h-[15px] w-[13px] shrink-0" fill="none" stroke={DARK} aria-hidden="true">
      <path d="M.500 8.500h12v6h-12zM3.500 8.500v-4q0-3.500 3-3.500t3 3.500v4" />
    </svg>
  );
}

const tabs = [
  { name: "Paramètres", width: "w-[102px]", lock: true },
  { name: "Budget prévisionnel", width: "w-[152px]", lock: true },
  { name: "Dépenses & paiements", width: "w-[163px]", lock: true },
  { name: "Prestataires", width: "w-[106px]", lock: true },
  { name: "Contributeurs", width: "w-[118px]", lock: true },
  { name: "Échéances", width: "w-[98px]", lock: true },
  { name: "Mode d'emploi", width: "w-[101px]", lock: false },
];

function SheetTabs() {
  return (
    <div className="flex h-[21px] shrink-0 items-stretch border-b border-[#b8b5b2] text-[11px]">
      <svg viewBox="0 0 82 18" className="ml-[7px] h-[18px] w-[82px] self-center" fill="none" stroke="#c9c7c5" strokeWidth="1.500" aria-hidden="true">
        <path d="M2 2v14M16 2l-8 7l8 7M14 6l3 3l-3 3l-3-3zM22 4v10M31 4v10l-7-5zM38 4v10l-7-5zM43 4v10l7-5zM50 4v10l7-5zM60 4v10M64 2l8 7l-8 7M68 6l3 3l-3 3l-3-3zM80 2v14" />
      </svg>
      <button aria-label="Add sheet" className="ml-2.5 flex w-6 items-center">
        <svg viewBox="0 0 18 18" className="size-[18px]" fill="none" aria-hidden="true">
          <path d="M1.500 .500h7l4 4v13h-11z" fill="#fff" stroke="#d6d4d2" /><circle cx="14" cy="9" r="2.500" fill="#fff" stroke="#1c5fb0" strokeWidth="1.500" /><path d="M14 7v4M12 9h4" stroke="#1c5fb0" />
        </svg>
      </button>
      <button className="flex w-[129px] items-center gap-[5px] border-b-2 border-[#8c8c8a] bg-white pl-0.5 text-[12px] font-bold whitespace-nowrap"><Lock />Tableau de bord</button>
      {tabs.map((t) => (
        <button key={t.name} className={clsx("flex items-center pl-px whitespace-nowrap", t.width)}>
          {t.lock && <Lock />}
          <span className={clsx("flex-1", t.lock ? "pl-2 text-left" : "text-center")}>{t.name}</span>
          <span className="h-3 w-px bg-[#b8b5b2]" />
        </button>
      ))}
    </div>
  );
}

function StatusBar() {
  return (
    <footer className="flex h-[23px] shrink-0 items-stretch text-[11px] [&>*]:border-[#dad8d6]">
      <span className="flex w-[29px] items-center justify-end border-r pr-1.5">
        <svg viewBox="0 0 14 14" className="size-3.5" fill="none" stroke="#888" aria-hidden="true"><path d="M.500 .500h13v13h-11l-2-2zM3.500 .500v4h7v-4M3.500 13.500v-5h7v5M5.500 10v3" /></svg>
      </span>
      <span className="flex w-[206px] items-center border-r pl-[7px]">Sheet 1 of 9</span>
      <span className="flex w-[287px] items-center border-r pl-2">Selected: 1 row, 8 columns</span>
      <span className="flex w-[289px] items-center border-r pl-2">PageStyle_Tableau de bord</span>
      <span className="flex w-[222px] items-center justify-center border-r">English (USA)</span>
      <span className="w-[61px] border-r" />
      <span className="flex w-[42px] items-center justify-center gap-1 border-r">
        <span className="h-2.5 w-4 border border-[#4a9bd3]" />
        <svg viewBox="0 0 7 15" className="h-[15px] w-[7px]" fill="none" stroke={DARK} aria-hidden="true"><path d="M.500 .500h6M3.500 .500v14M.500 14.500h6" /></svg>
      </span>
      <span className="w-[26px] border-r" />
      <span className="w-[27px] border-r" />
      <span className="flex flex-1 items-center justify-center border-r">Average: ; Sum: 0</span>
      <span className="flex w-[128px] items-center justify-center gap-1 border-r pl-1">
        <button aria-label="Zoom out" className="h-0.5 w-2 bg-[#2b2b2a]" />
        <span className="relative flex h-4 w-[88px] items-center">
          <input type="range" aria-label="Zoom" min={10} max={180} defaultValue={70} className="absolute inset-0 w-full opacity-0" />
          <svg viewBox="0 0 88 12" className="h-3 w-[88px]" fill="none" aria-hidden="true"><path d="M0 6h88M43 3v6" stroke="#8c8c8a" /><rect x="25.500" y="2" width="3" height="8" fill="#fff" stroke={DARK} /></svg>
        </span>
        <button aria-label="Zoom in" className="flex size-2.5 items-center">
          <svg viewBox="0 0 10 10" className="size-2.5" stroke="#2b2b2a" strokeWidth="2" aria-hidden="true"><path d="M5 1v8M1 5h8" /></svg>
        </button>
      </span>
      <span className="flex w-[44px] items-center justify-center pr-1">70%</span>
    </footer>
  );
}

// ─── App ──────────────────────────────────────────────────

const menus = ["File", "Edit", "View", "Insert", "Format", "Styles", "Sheet", "Data", "Tools", "Window", "Help"];

export default function App() {
  return (
    <div className="flex h-screen flex-col overflow-hidden bg-[#f6f5f4] font-['Noto_Sans',sans-serif] text-[12px] text-[#3b3b3a]">
      <nav className="mr-5 flex h-[23px] shrink-0 items-center gap-[15px] border-b border-[#d9d7d5] pl-[7px]">
        {menus.map((m) => <button key={m}>{m}</button>)}
        <button aria-label="Close document" className="-mr-2.5 ml-auto">
          <svg viewBox="0 0 10 10" className="size-[9px]" stroke="#2b2b2a" strokeWidth="2.200" aria-hidden="true"><path d="M1 1l8 8M9 1l-8 8" /></svg>
        </button>
      </nav>
      <div className="flex h-[35px] shrink-0 items-center pl-0.5"><Tools items={standard} className="w-[1114px]" /></div>
      <div className="flex h-9 shrink-0 items-center pl-1">
        <Combo label="Font name" value="Calibri" className="w-[183px]" italic />
        <Combo label="Font size" value="16 pt" className="mr-[3px] ml-[7px] w-[90px]" />
        <Divider />
        <Tools items={formatting} className="ml-[3px] w-[1070px]" />
      </div>

      <div className="flex min-h-0 flex-1">
        <main className="flex min-w-0 flex-1 flex-col">
          <div className="flex h-[39px] shrink-0 items-center pr-[5px] pb-1 pl-1">
            <Combo label="Name box" value="A1:H1" className="mr-1 w-[143px]" />
            <Divider />
            <button aria-label="Function wizard" className="ml-1 [&>svg]:size-5">{icons.fx}</button>
            <button aria-label="Select function" className="flex items-center [&>svg:first-child]:size-[22px]">{icons.sigma}<Caret /></button>
            <button aria-label="Formula" className="ml-px [&>svg]:size-6">{icons.equal}</button>
            <input aria-label="Input line" defaultValue="Budget mariage — Tableau de bord" className="h-6 min-w-0 flex-1 border border-[#c4c2c0] bg-white px-[5px] outline-none" />
            <button aria-label="Expand formula bar" className="ml-1"><Caret big /></button>
          </div>
          <div className="flex min-h-0 flex-1">
            <div className="relative min-w-0 flex-1 overflow-hidden bg-white">
              <Sheet />
              <PieChart />
              <SpendChart />
              <DueChart />
            </div>
            <div className="w-[13px] bg-[#cdcdcc] px-[3px] pt-0.5"><div className="h-[48%] rounded-full bg-[#7f8382]" /></div>
          </div>
          <div className="mr-[13px] flex h-[13px] shrink-0 items-center justify-between bg-[#cdcdcc] pl-[3px]">
            <div className="h-2 w-[46.5%] rounded-full bg-[#7f8382]" />
            <div className="h-2 w-0.5 bg-[#444]" />
          </div>
          <SheetTabs />
        </main>
        <aside className="relative flex w-[52px] shrink-0 flex-col items-center gap-[15px] border-b border-l border-b-[#b8b5b2] border-l-[#c4c2c0] pt-[7px]">
          {["menu", "properties", "styles", "gallery", "navigator", "fx"].map((id) => (
            <button key={id} aria-label={id} className="[&>svg]:size-6">{icons[id]}</button>
          ))}
          <button aria-label="Hide sidebar" className="absolute top-[358px] left-0 flex h-[67px] w-1.5 items-center bg-[#8f9192]">
            <svg viewBox="0 0 5 8" className="h-2 w-[5px]" aria-hidden="true"><path d="M0 0l5 4l-5 4z" fill="#fff" /></svg>
          </button>
        </aside>
      </div>
      <StatusBar />
    </div>
  );
}
